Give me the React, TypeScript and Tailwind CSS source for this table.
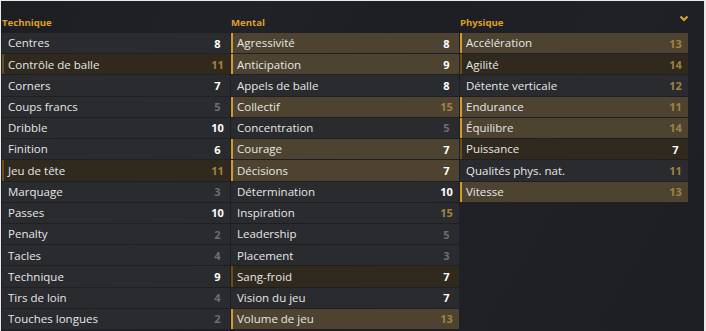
import React from "react";

type Hl = "key" | "pref" | undefined;
type Attr = { label: string; value: number; hl?: Hl };

const technique: Attr[] = [
  { label: "Centres", value: 8 },
  { label: "Contrôle de balle", value: 11, hl: "pref" },
  { label: "Corners", value: 7 },
  { label: "Coups francs", value: 5 },
  { label: "Dribble", value: 10 },
  { label: "Finition", value: 6 },
  { label: "Jeu de tête", value: 11, hl: "pref" },
  { label: "Marquage", value: 3 },
  { label: "Passes", value: 10 },
  { label: "Penalty", value: 2 },
  { label: "Tacles", value: 4 },
  { label: "Technique", value: 9 },
  { label: "Tirs de loin", value: 4 },
  { label: "Touches longues", value: 2 },
];

const mental: Attr[] = [
  { label: "Agressivité", value: 8, hl: "key" },
  { label: "Anticipation", value: 9, hl: "key" },
  { label: "Appels de balle", value: 8 },
  { label: "Collectif", value: 15, hl: "key" },
  { label: "Concentration", value: 5 },
  { label: "Courage", value: 7, hl: "key" },
  { label: "Décisions", value: 7, hl: "key" },
  { label: "Détermination", value: 10 },
  { label: "Inspiration", value: 15 },
  { label: "Leadership", value: 5 },
  { label: "Placement", value: 3 },
  { label: "Sang-froid", value: 7, hl: "pref" },
  { label: "Vision du jeu", value: 7 },
  { label: "Volume de jeu", value: 13, hl: "key" },
];

const physique: Attr[] = [
  { label: "Accélération", value: 13, hl: "key" },
  { label: "Agilité", value: 14, hl: "pref" },
  { label: "Détente verticale", value: 12 },
  { label: "Endurance", value: 11, hl: "key" },
  { label: "Équilibre", value: 14, hl: "key" },
  { label: "Puissance", value: 7, hl: "pref" },
  { label: "Qualités phys. nat.", value: 11 },
  { label: "Vitesse", value: 13, hl: "key" },
];

function Row({ a }: { a: Attr }) {
  const rowCls =
    a.hl === "key"
      ? "bg-[#4d4330] border-[#d39b2c]"
      : a.hl === "pref"
      ? "bg-[#30291e] border-[#6a4f1c]"
      : "bg-[#2a2b2f] border-transparent";
  const valCls =
    a.value >= 11
      ? "text-[#a08240]"
      : a.value >= 6
      ? "text-[#ffffff]"
      : "text-[#6c6e74]";
  return (
    <div
      className={`h-[20.23px] flex items-center border-l-2 pl-[4px] pr-[4px] ${rowCls}`}
    >
      <span className="flex-1 text-[11.5px] leading-none text-[#e6e6e6] whitespace-nowrap">
        {a.label}
      </span>
      <span className={`w-[17px] text-center text-[11px] font-bold leading-none ${valCls}`}>
        {a.value}
      </span>
    </div>
  );
}

function Column({
  title,
  items,
  chevron,
}: {
  title: string;
  items: Attr[];
  chevron?: boolean;
}) {
  return (
    <div className="w-[228px] flex flex-col">
      <div className="h-[32px] flex items-start justify-between">
        <span className="pt-[16px] text-[9.6px] leading-[12px] font-bold text-[#dca02a]">
          {title}
        </span>
        {chevron && (
          <svg
            width="10"
            height="7"
            viewBox="0 0 10 7"
            className="mt-[14px] mr-[-1px]"
          >
            <polyline
              points="1.5,1.5 5,5 8.5,1.5"
              fill="none"
              stroke="#dca02a"
              strokeWidth="2.2"
            />
          </svg>
        )}
      </div>
      <div className="flex flex-col gap-[1px]">
        {items.map((a) => (
          <Row key={a.label} a={a} />
        ))}
      </div>
    </div>
  );
}

export default function App() {
  return (
    <div
      className="w-[706px] h-[331px] bg-[#e9e9ea] pt-[1px] pl-[1px] pr-[2px] overflow-hidden"
      style={{ fontFamily: '"Open Sans", "Noto Sans", sans-serif' }}
    >
      <div className="h-[330px] bg-[#1d1e22] bg-[linear-gradient(120deg,#1d1e22_0%,#212227_30%,#1d1e22_45%,#202126_70%,#1d1e22_100%)] pl-[1px] flex gap-[1px]">
        <Column title="Technique" items={technique} />
        <Column title="Mental" items={mental} />
        <Column title="Physique" items={physique} chevron />
      </div>
    </div>
  );
}
